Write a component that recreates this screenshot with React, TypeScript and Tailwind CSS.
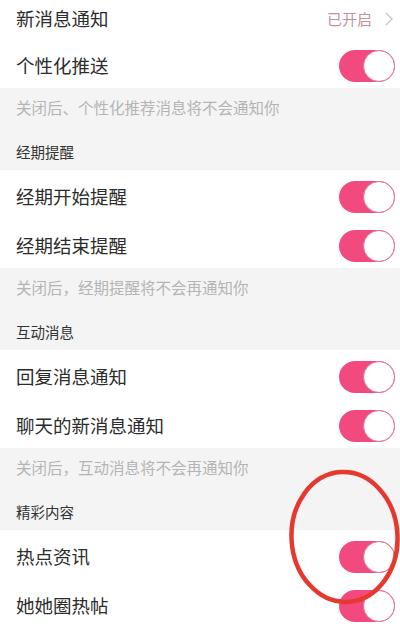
import React from "react";

const font = { fontFamily: '"Noto Sans CJK SC", "Noto Sans", sans-serif' };

function Toggle() {
  return (
    <div className="flex h-[32px] w-[56px] justify-end rounded-full bg-[#f2497f]">
      <div className="h-[32px] w-[32px] rounded-full border border-[#d97a98] bg-white" />
    </div>
  );
}

function Row({ label }: { label: string }) {
  return (
    <div className="flex h-[49px] items-center justify-between bg-white pl-[16px] pr-[5px] pt-[4px]">
      <span className="text-[18.5px] leading-none text-[#2c2c2c]">{label}</span>
      <Toggle />
    </div>
  );
}

function Gap({ note, header }: { note: string; header: string }) {
  return (
    <div className="flex h-[82px] flex-col bg-[#f4f4f4] pl-[16px] pt-[10px]">
      <div className="flex h-[20px] items-center text-[15.5px] leading-none text-[#b4b4b4]">{note}</div>
      <div className="mt-[24px] flex h-[20px] items-center text-[14.5px] leading-none text-[#333]">{header}</div>
    </div>
  );
}

export default function App() {
  return (
    <div className="relative h-[628px] w-[400px] overflow-hidden bg-white" style={font}>
      <div className="flex h-[39px] items-center justify-between bg-white pb-[2px] pl-[16px] pr-[7px]">
        <span className="text-[18.5px] leading-none text-[#2c2c2c]">新消息通知</span>
        <div className="flex items-center gap-[13px]">
          <span className="text-[15px] leading-none text-[#c4909e]">已开启</span>
          <svg width="8" height="14" viewBox="0 0 8 14" fill="none">
            <polyline points="1,1 7,7 1,13" stroke="#c8c8c8" strokeWidth="1.4" />
          </svg>
        </div>
      </div>
      <Row label="个性化推送" />
      <Gap note="关闭后、个性化推荐消息将不会通知你" header="经期提醒" />
      <Row label="经期开始提醒" />
      <Row label="经期结束提醒" />
      <Gap note="关闭后，经期提醒将不会再通知你" header="互动消息" />
      <Row label="回复消息通知" />
      <Row label="聊天的新消息通知" />
      <Gap note="关闭后，互动消息将不会再通知你" header="精彩内容" />
      <Row label="热点资讯" />
      <Row label="她她圈热帖" />
      <svg className="pointer-events-none absolute left-0 top-0" width="400" height="628" viewBox="0 0 400 628">
        <ellipse cx="344.5" cy="537" rx="53" ry="65" fill="none" stroke="#e5392f" strokeWidth="4.5" transform="rotate(-3 344.5 537)" />
      </svg>
    </div>
  );
}
